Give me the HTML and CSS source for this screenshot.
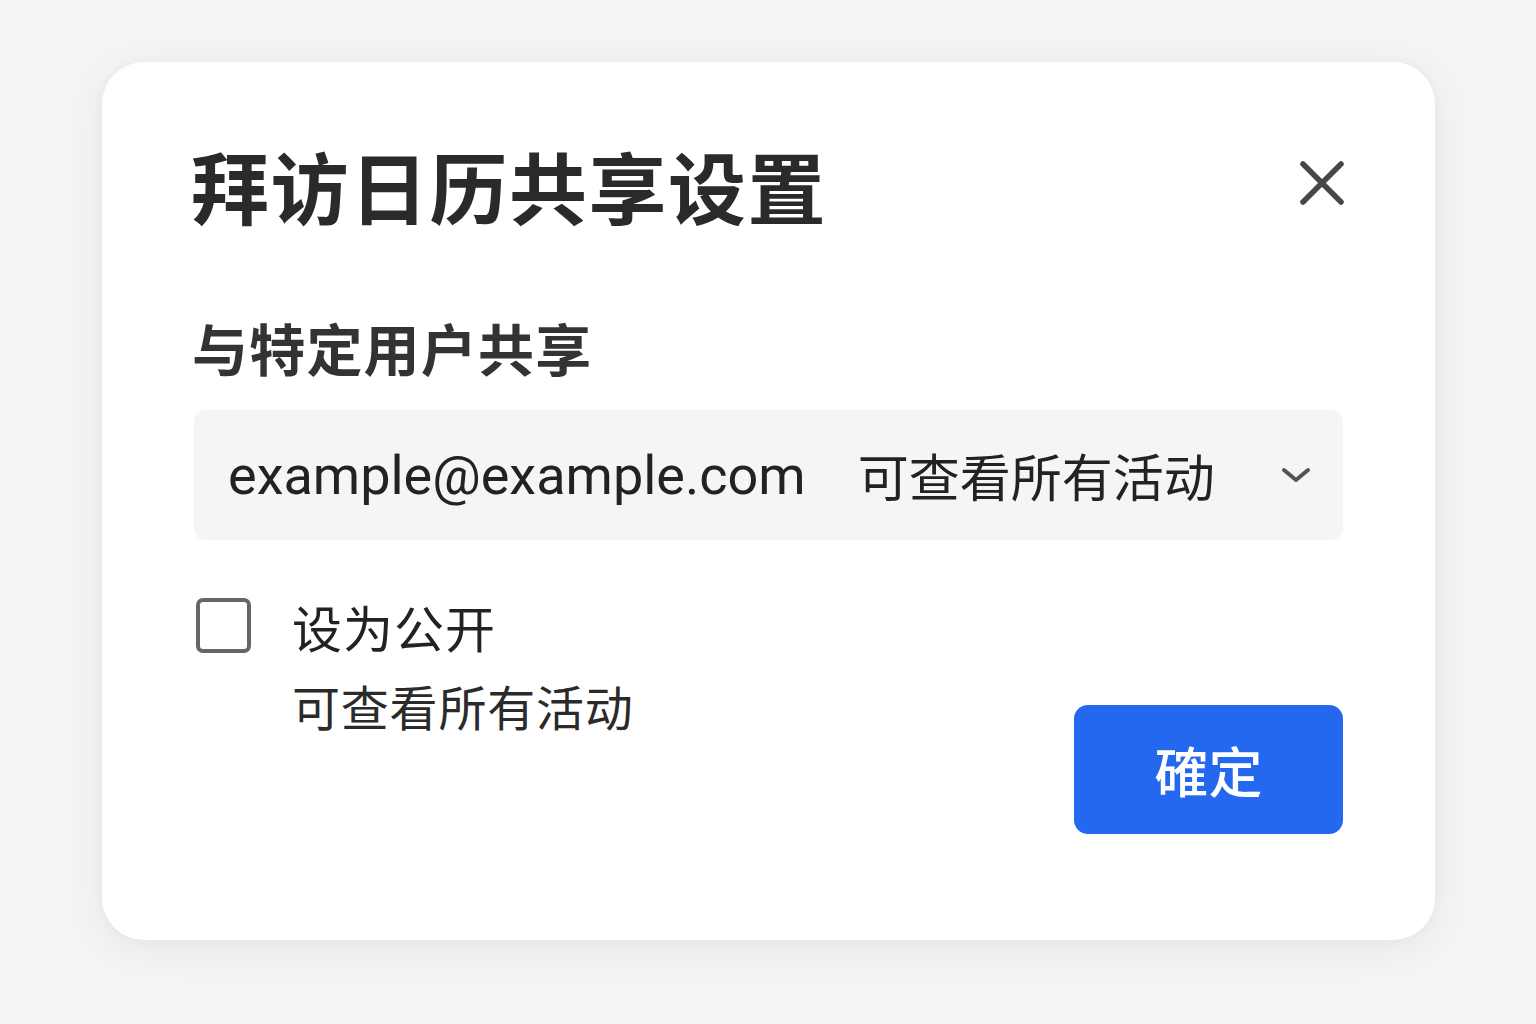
FILE: index.html
```html
<!DOCTYPE html>
<html lang="zh-CN">
<head>
<meta charset="utf-8">
<title>拜访日历共享设置</title>
<link rel="stylesheet" href="styles.css">
</head>
<body>
<div class="page">
  <div class="dialog">
    <div class="dialog-header">
      <h1 class="dialog-title">拜访日历共享设置</h1>
      <svg class="close-icon" width="48" height="48" viewBox="0 0 48 48" aria-label="关闭">
        <line x1="5" y1="5" x2="43" y2="43" stroke="#474747" stroke-width="5.5" stroke-linecap="round"/>
        <line x1="43" y1="5" x2="5" y2="43" stroke="#474747" stroke-width="5.5" stroke-linecap="round"/>
      </svg>
    </div>
    <div class="section-label">与特定用户共享</div>
    <div class="share-field">
      <span class="share-email">example@example.com</span>
      <span class="share-permission">可查看所有活动</span>
      <svg class="chevron" width="30" height="18" viewBox="0 0 30 18">
        <polyline points="3,4 15,14 27,4" fill="none" stroke="#555" stroke-width="4" stroke-linecap="round" stroke-linejoin="round"/>
      </svg>
    </div>
    <div class="dialog-footer">
      <div class="public-option">
        <div class="checkbox-row">
          <span class="checkbox"></span>
          <span class="checkbox-label">设为公开</span>
        </div>
        <div class="checkbox-hint">可查看所有活动</div>
      </div>
      <button class="confirm-btn">確定</button>
    </div>
  </div>
</div>
</body>
</html>
```
FILE: styles.css
```css
html, body {
  margin: 0;
  padding: 0;
}
body {
  background: #f4f4f4;
  font-family: "Noto Sans CJK SC", "Noto Sans", sans-serif;
  color: #222;
  width: 1536px;
  height: 1024px;
  overflow: hidden;
}
.page {
  padding: 62px 0 0 102px;
}
.dialog {
  box-sizing: border-box;
  width: 1333px;
  height: 878px;
  background: #fff;
  border-radius: 42px;
  box-shadow: 0 8px 40px rgba(0, 0, 0, 0.06), 0 0 12px rgba(0, 0, 0, 0.03);
  padding: 84px 92px 0 92px;
}
.dialog-header {
  display: flex;
  align-items: center;
  justify-content: space-between;
  height: 78px;
}
.dialog-title {
  margin: 0 0 0 -3px;
  font-size: 78px;
  line-height: 78px;
  font-weight: 700;
  color: #2a2a2a;
  letter-spacing: 1.5px;
}
.close-icon {
  margin-right: -3px;
  margin-top: -4px;
}
.section-label {
  margin-top: 95px;
  font-size: 56px;
  line-height: 56px;
  font-weight: 700;
  color: #333;
  margin-left: -2px;
  letter-spacing: 1.2px;
}
.share-field {
  margin-top: 35px;
  height: 130px;
  box-sizing: border-box;
  background: #f4f5f6;
  border-radius: 12px;
  display: flex;
  align-items: center;
  padding: 0 32px 0 34px;
}
.share-email {
  font-family: Roboto, "Noto Sans", sans-serif;
  font-size: 54px;
  color: #222;
}
.share-permission {
  margin-left: 52px;
  font-size: 51px;
  color: #222;
}
.chevron {
  margin-left: auto;
}
.dialog-footer {
  margin-top: 58px;
  display: flex;
  justify-content: space-between;
  align-items: flex-start;
}
.checkbox-row {
  display: flex;
  align-items: center;
  height: 55px;
}
.checkbox {
  box-sizing: border-box;
  width: 55px;
  height: 55px;
  margin-left: 2px;
  border: 4px solid #666;
  border-radius: 7px;
  background: #fff;
}
.checkbox-label {
  margin-left: 41px;
  font-size: 50px;
  line-height: 50px;
  color: #222;
  letter-spacing: 1px;
}
.checkbox-hint {
  margin-top: 28px;
  margin-left: 98px;
  font-size: 48px;
  line-height: 48px;
  color: #2a2a2a;
  letter-spacing: 0.8px;
}
.confirm-btn {
  margin-top: 107px;
  width: 269px;
  height: 129px;
  border: none;
  border-radius: 14px;
  background: #2368ee;
  color: #fff;
  font-family: "Noto Sans CJK TC", "Noto Sans CJK SC", sans-serif;
  font-size: 54px;
  font-weight: 500;
  padding: 0;
}
```
